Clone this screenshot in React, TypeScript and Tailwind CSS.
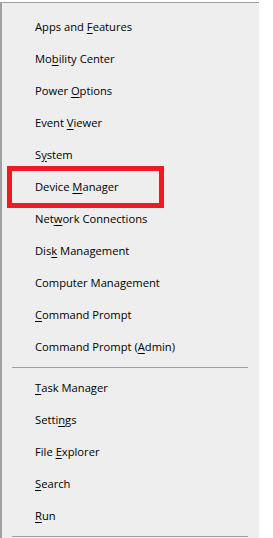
import React from "react";

type Item = {
  before: string;
  key: string;
  after: string;
  highlight?: boolean;
};

const topItems: Item[] = [
  { before: "Apps and ", key: "F", after: "eatures" },
  { before: "Mo", key: "b", after: "ility Center" },
  { before: "Power ", key: "O", after: "ptions" },
  { before: "Event ", key: "V", after: "iewer" },
  { before: "S", key: "y", after: "stem" },
  { before: "Device ", key: "M", after: "anager", highlight: true },
  { before: "Net", key: "w", after: "ork Connections" },
  { before: "Dis", key: "k", after: " Management" },
  { before: "Computer Mana", key: "g", after: "ement" },
  { before: "", key: "C", after: "ommand Prompt" },
  { before: "Command Prompt (", key: "A", after: "dmin)" },
];

const bottomItems: Item[] = [
  { before: "", key: "T", after: "ask Manager" },
  { before: "Setti", key: "n", after: "gs" },
  { before: "File ", key: "E", after: "xplorer" },
  { before: "", key: "S", after: "earch" },
  { before: "", key: "R", after: "un" },
];

const MenuItem = ({ item }: { item: Item }) => (
  <div className="relative flex h-8 items-center pl-[33px] text-[11.2px] text-black">
    <span className="whitespace-pre">
      {item.before}
      <span className="underline underline-offset-[2px]">{item.key}</span>
      {item.after}
    </span>
    {item.highlight && (
      <div className="absolute -top-[5px] -bottom-[5px] left-[5px] w-[157px] border-[5px] border-[#ed1c24]" />
    )}
  </div>
);

const Separator = () => (
  <div className="py-1 pl-[10px] pr-[11px]">
    <div className="h-px bg-[#a0a0a0]" />
  </div>
);

export default function App() {
  return (
    <div
      className="h-[538px] w-[273px] overflow-hidden bg-white"
      style={{ fontFamily: '"Open Sans", "Noto Sans", sans-serif' }}
    >
      {/* cut-off menubar of the window behind */}
      <div className="h-[2px] overflow-hidden">
        <div className="-mt-[11px] whitespace-pre pl-[182px] text-[12px] leading-[14px] text-[#333]">
          {"File   Edit   View   Insert   Fo"}
        </div>
      </div>
      <div className="w-[259px] border-t border-l-2 border-[#a0a0a0] bg-[#eeeeee] pt-2">
        {topItems.map((item) => (
          <MenuItem key={item.before + item.key} item={item} />
        ))}
        <Separator />
        {bottomItems.map((item) => (
          <MenuItem key={item.before + item.key} item={item} />
        ))}
        <Separator />
      </div>
    </div>
  );
}
